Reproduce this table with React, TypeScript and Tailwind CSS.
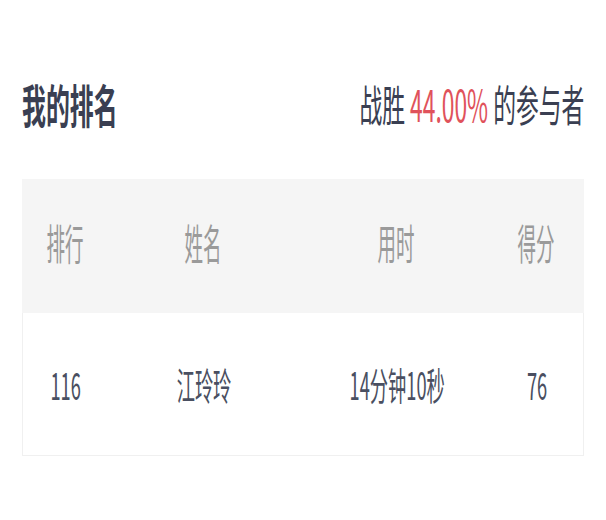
import React from "react";

const font = { fontFamily: '"Noto Sans CJK SC", "Noto Sans", sans-serif' };

export default function App() {
  const headers = ["排行", "姓名", "用时", "得分"];
  const values = ["116", "江玲玲", "14分钟10秒", "76"];
  return (
    <div className="w-[606px] h-[520px] bg-white px-[22px] overflow-hidden" style={font}>
      <div className="mt-[73px] h-[60px] flex items-center">
        <span className="inline-block shrink-0 origin-left scale-x-[0.52] text-[46px] font-bold leading-none text-[#3a3f52] whitespace-nowrap">
          我的排名
        </span>
        <div className="flex-1 min-w-0 flex justify-end">
          <span className="inline-block shrink-0 origin-right scale-x-[0.53] text-[43px] leading-none text-[#3a3f52] whitespace-nowrap">
            战胜 <span className="text-[#e0525b]">44.00%</span> 的参与者
          </span>
        </div>
      </div>
      <div className="mt-[46px] w-[562px]">
        <div className="h-[134px] bg-[#f5f5f5] grid grid-cols-[86px_190px_196px_1fr] items-center">
          {headers.map((h) => (
            <div key={h} className="flex justify-center last:pr-[6px]">
              <span className="inline-block -translate-y-[4px] scale-x-[0.44] text-[42px] leading-none text-[#9a9a9a] whitespace-nowrap">
                {h}
              </span>
            </div>
          ))}
        </div>
        <div className="h-[143px] border border-t-0 border-[#f0f0f0] grid grid-cols-[86px_190px_196px_1fr] items-center">
          {values.map((v) => (
            <div key={v} className="flex justify-center last:pr-[4px]">
              <span className="inline-block scale-x-[0.48] text-[38px] leading-none text-[#4a4f61] whitespace-nowrap">
                {v}
              </span>
            </div>
          ))}
        </div>
      </div>
    </div>
  );
}
